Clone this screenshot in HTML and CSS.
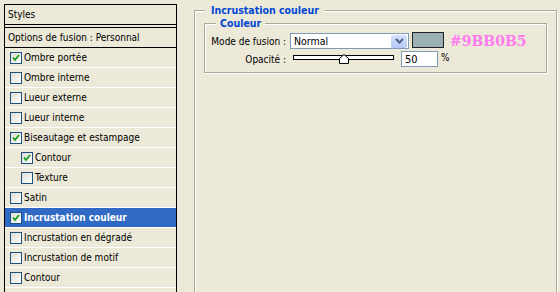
FILE: index.html
```html
<!DOCTYPE html>
<html lang="fr">
<head>
    <meta charset="UTF-8">
    <title>Style de calque - Incrustation couleur</title>
    <link rel="stylesheet" href="styles.css">
</head>
<body>
    <div class="window">
        <div class="styles-panel">
            <div class="panel-head">Styles</div>
            <div class="panel-blend">Options de fusion : Personnal</div>
            <ul class="fx-list">
                <li class="fx"><span class="check on"></span>Ombre portée</li>
                <li class="fx"><span class="check"></span>Ombre interne</li>
                <li class="fx"><span class="check"></span>Lueur externe</li>
                <li class="fx"><span class="check"></span>Lueur interne</li>
                <li class="fx"><span class="check on"></span>Biseautage et estampage</li>
                <li class="fx sub"><span class="check on"></span>Contour</li>
                <li class="fx sub"><span class="check"></span>Texture</li>
                <li class="fx"><span class="check"></span>Satin</li>
                <li class="fx active"><span class="check on"></span>Incrustation couleur</li>
                <li class="fx"><span class="check"></span>Incrustation en dégradé</li>
                <li class="fx"><span class="check"></span>Incrustation de motif</li>
                <li class="fx"><span class="check"></span>Contour</li>
                <li class="fx"></li>
            </ul>
        </div>

        <div class="settings">
            <fieldset class="group">
                <legend>Incrustation couleur</legend>
                <fieldset class="group inner">
                    <legend>Couleur</legend>
                    <div class="field">
                        <label>Mode de fusion :</label>
                        <div class="select">
                            <span>Normal</span>
                            <span class="select-btn">
                                <svg width="9" height="6" viewBox="0 0 9 6"><path d="M1 1 L4.5 4.5 L8 1" fill="none" stroke="#4d6185" stroke-width="2"/></svg>
                            </span>
                        </div>
                        <span class="swatch"></span>
                        <span class="hex">#9BB0B5</span>
                    </div>
                    <div class="field">
                        <label>Opacité :</label>
                        <div class="slider">
                            <span class="track"></span>
                            <svg class="thumb" width="10" height="10" viewBox="0 0 10 10"><path d="M0.5 9.5 V4.5 L5 0.5 L9.5 4.5 V9.5 Z" fill="#fff" stroke="#000"/></svg>
                        </div>
                        <input class="num" type="text" value="50">
                        <span class="unit">%</span>
                    </div>
                </fieldset>
            </fieldset>
        </div>
    </div>
</body>
</html>
```

FILE: styles.css
```css
body {
    margin: 0;
    background: #ece9d8;
    font-family: "DejaVu Sans Condensed", "DejaVu Sans", sans-serif;
    font-stretch: condensed;
    font-size: 10px;
    color: #000;
}
.window {
    display: flex;
    align-items: flex-start;
    padding: 4px 0 0 4px;
    height: 292px;
    box-sizing: border-box;
    overflow: hidden;
}
.styles-panel {
    width: 171px;
    border: 1px solid #000;
    border-bottom: 0;
    flex-shrink: 0;
}
.panel-head {
    height: 19px;
    line-height: 19px;
    padding-left: 3px;
    border-bottom: 1px solid #000;
    margin-bottom: 2px;
}
.panel-blend {
    height: 19px;
    line-height: 19px;
    padding-left: 3px;
    border-top: 1px solid #000;
    border-bottom: 1px solid #000;
}
.fx-list {
    list-style: none;
    margin: 0;
    padding: 0;
}
.fx {
    display: flex;
    align-items: center;
    gap: 2px;
    height: 19px;
    padding-left: 5px;
    border-bottom: 1px solid #fff;
    white-space: nowrap;
}
.fx.sub {
    padding-left: 16px;
}
.fx.active {
    background: #316ac5;
    color: #fff;
    font-weight: bold;
}
.check {
    width: 10px;
    height: 10px;
    border: 1px solid #1c5180;
    background: linear-gradient(135deg, #dcdcd7, #fff);
    flex-shrink: 0;
}
.check.on {
    background-image: url("data:image/svg+xml,%3Csvg xmlns='http://www.w3.org/2000/svg' width='10' height='10'%3E%3Cpath d='M2 4.5 L4 7 L8 2' fill='none' stroke='%2321a121' stroke-width='2'/%3E%3C/svg%3E"), linear-gradient(135deg, #dcdcd7, #fff);
}
.settings {
    margin-left: 17px;
}
.group {
    margin: 0;
    border: 1px solid #aca899;
    box-shadow: 1px 1px 0 #fff, inset 1px 1px 0 #fff;
    padding: 0 9px 6px 9px;
    width: 363px;
    min-height: 300px;
    box-sizing: border-box;
}
.group legend {
    color: #0046d5;
    font-weight: bold;
    font-size: 10.5px;
    line-height: 13px;
    padding: 0 6px;
    margin-left: 1px;
    background: #ece9d8;
}
.group.inner {
    width: auto;
    min-height: 0;
    padding: 3px 0 5px 4px;
}
.group.inner legend {
    padding: 0 4px;
    margin-left: 7px;
}
.field {
    display: flex;
    align-items: center;
    height: 16px;
}
.field + .field {
    margin-top: 2px;
}
.field label {
    width: 77px;
    flex-shrink: 0;
    text-align: right;
    margin-right: 4px;
    white-space: nowrap;
}
.select {
    width: 119px;
    height: 16px;
    box-sizing: border-box;
    border: 1px solid #7f9db9;
    background: #fff;
    display: flex;
    align-items: center;
    justify-content: space-between;
    padding: 0 0 0 3px;
    font-size: 10.5px;
}
.select-btn {
    width: 16px;
    height: 13px;
    margin-right: 1px;
    border-radius: 2px;
    background: linear-gradient(#d4e0fd, #b5c9f7);
    display: flex;
    align-items: center;
    justify-content: center;
}
.swatch {
    width: 32px;
    height: 16px;
    box-sizing: border-box;
    margin-left: 3px;
    margin-top: -2px;
    border: 1px solid #222;
    background: #9bb0b5;
}
.hex {
    margin-left: 6px;
    font-family: "DejaVu Serif", serif;
    font-stretch: normal;
    font-weight: bold;
    font-size: 14px;
    color: #ff7aef;
}
.slider {
    position: relative;
    width: 108px;
    height: 16px;
}
.track {
    position: absolute;
    left: 3px;
    top: 4px;
    width: 101px;
    height: 5px;
    box-sizing: border-box;
    border: 1px solid #000;
    background: #fff;
}
.thumb {
    position: absolute;
    left: 49px;
    top: 3px;
}
.num {
    width: 37px;
    height: 16px;
    box-sizing: border-box;
    margin: 0 0 0 3px;
    border: 1px solid #7f9db9;
    padding: 0 3px;
    font: inherit;
    font-size: 11px;
    background: #fff;
}
.unit {
    margin-left: 3px;
    margin-top: -3px;
}
```
